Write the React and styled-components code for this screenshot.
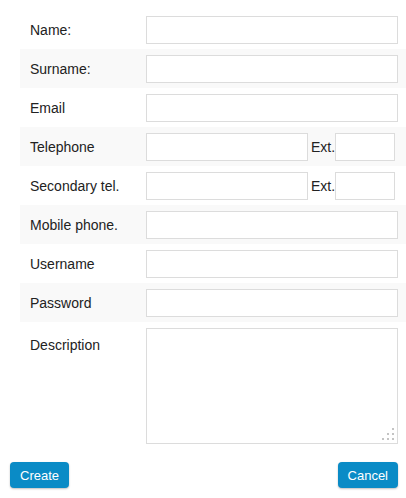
import React from "react";
import styled, { createGlobalStyle } from "styled-components";

const Global = createGlobalStyle`
  html, body { margin: 0; padding: 0; background: #fff; }
  body { font-family: "Liberation Sans", Arial, sans-serif; font-size: 14px; color: #222; }
`;

const Page = styled.div`
  padding: 10px 0 10px 10px;
  width: 396px;
`;

const Form = styled.div`
  display: flex;
  flex-direction: column;
  margin-left: 10px;
`;

const Row = styled.div`
  display: flex;
  align-items: ${(p) => (p.$top ? "flex-start" : "center")};
  height: ${(p) => (p.$top ? "auto" : "39px")};
  padding: ${(p) => (p.$top ? "6px 0" : "0")};
  padding-left: 10px;
  background: ${(p) => (p.$striped ? "#f9f9f9" : "transparent")};
`;

const Label = styled.div`
  width: 116px;
  flex: none;
  line-height: 18px;
  margin-top: ${(p) => (p.$top ? "8px" : "0")};
`;

const Input = styled.input`
  box-sizing: border-box;
  width: ${(p) => p.$w}px;
  height: 28px;
  border: 1px solid #dcdcdc;
  background: #fff;
  margin: 0;
  padding: 0 4px;
  font: inherit;
  outline: none;
`;

const Ext = styled.span`
  margin: 0 0 0 3px;
  line-height: 18px;
`;

const AreaWrap = styled.div`
  position: relative;
  width: 252px;
  height: 116px;
`;

const Area = styled.textarea`
  box-sizing: border-box;
  display: block;
  width: 252px;
  height: 116px;
  border: 1px solid #dcdcdc;
  margin: 0;
  resize: none;
  outline: none;
  font: inherit;
`;

const Grip = styled.svg`
  position: absolute;
  right: 3px;
  bottom: 3px;
`;

const Actions = styled.div`
  display: flex;
  justify-content: space-between;
  margin-top: 12px;
  margin-right: 8px;
`;

const Button = styled.button`
  box-sizing: border-box;
  height: 26px;
  padding: 0 10px;
  border: none;
  border-radius: 4px;
  background: #0a8bc6;
  color: #fff;
  font-family: "Liberation Sans", Arial, sans-serif;
  font-size: 13px;
  box-shadow: 0 1px 2px rgba(0, 0, 0, 0.25);
  cursor: pointer;
`;

const fields = [
  { label: "Name:" },
  { label: "Surname:" },
  { label: "Email" },
  { label: "Telephone", ext: true },
  { label: "Secondary tel.", ext: true },
  { label: "Mobile phone." },
  { label: "Username" },
  { label: "Password", type: "password" },
];

export default function App() {
  return (
    <Page>
      <Global />
      <Form>
        {fields.map((f, i) => (
          <Row key={f.label} $striped={i % 2 === 1}>
            <Label>{f.label}</Label>
            {f.ext ? (
              <>
                <Input $w={162} />
                <Ext>Ext.</Ext>
                <Input $w={60} />
              </>
            ) : (
              <Input $w={252} type={f.type || "text"} />
            )}
          </Row>
        ))}
        <Row $top>
          <Label $top>Description</Label>
          <AreaWrap>
            <Area />
            <Grip width="14" height="14" viewBox="0 0 14 14">
              <g fill="#c4c4c4">
                <rect x="11" y="1" width="2" height="2" />
                <rect x="6" y="6" width="2" height="2" />
                <rect x="11" y="6" width="2" height="2" />
                <rect x="1" y="11" width="2" height="2" />
                <rect x="6" y="11" width="2" height="2" />
                <rect x="11" y="11" width="2" height="2" />
              </g>
            </Grip>
          </AreaWrap>
        </Row>
      </Form>
      <Actions>
        <Button>Create</Button>
        <Button>Cancel</Button>
      </Actions>
    </Page>
  );
}
